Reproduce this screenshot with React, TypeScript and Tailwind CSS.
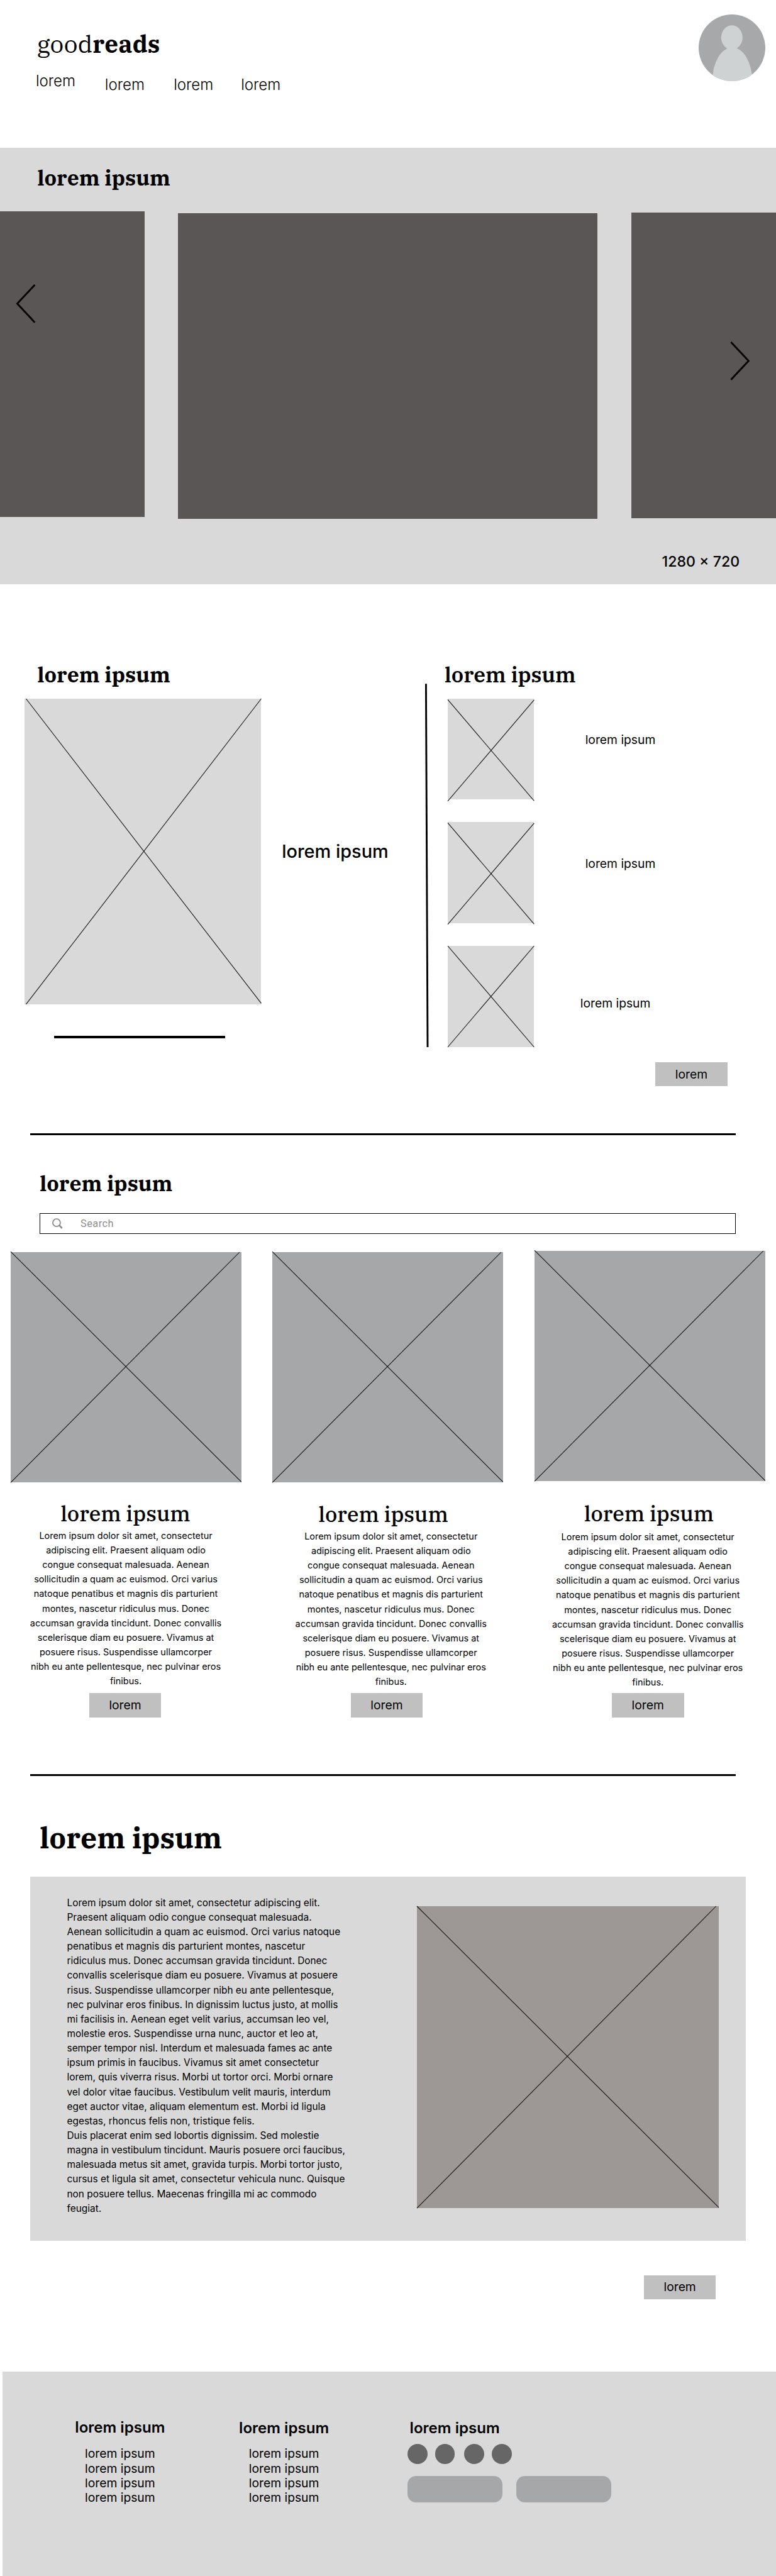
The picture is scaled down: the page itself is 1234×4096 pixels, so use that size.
const SERIF = "font-['IBM_Plex_Serif','DejaVu_Serif_Condensed',serif]";
const HEADING = `${SERIF} text-[35px] leading-[40px] font-bold whitespace-nowrap`;

const CARD_LINES = [
  "Lorem ipsum dolor sit amet, consectetur",
  "adipiscing elit. Praesent aliquam odio",
  "congue consequat malesuada. Aenean",
  "sollicitudin a quam ac euismod. Orci varius",
  "natoque penatibus et magnis dis parturient",
  "montes, nascetur ridiculus mus. Donec",
  "accumsan gravida tincidunt. Donec convallis",
  "scelerisque diam eu posuere. Vivamus at",
  "posuere risus. Suspendisse ullamcorper",
  "nibh eu ante pellentesque, nec pulvinar eros",
  "finibus.",
];

const ARTICLE_LINES = [
  "Lorem ipsum dolor sit amet, consectetur adipiscing elit.",
  "Praesent aliquam odio congue consequat malesuada.",
  "Aenean sollicitudin a quam ac euismod. Orci varius natoque",
  "penatibus et magnis dis parturient montes, nascetur",
  "ridiculus mus. Donec accumsan gravida tincidunt. Donec",
  "convallis scelerisque diam eu posuere. Vivamus at posuere",
  "risus. Suspendisse ullamcorper nibh eu ante pellentesque,",
  "nec pulvinar eros finibus. In dignissim luctus justo, at mollis",
  "mi facilisis in. Aenean eget velit varius, accumsan leo vel,",
  "molestie eros. Suspendisse urna nunc, auctor et leo at,",
  "semper tempor nisl. Interdum et malesuada fames ac ante",
  "ipsum primis in faucibus. Vivamus sit amet consectetur",
  "lorem, quis viverra risus. Morbi ut tortor orci. Morbi ornare",
  "vel dolor vitae faucibus. Vestibulum velit mauris, interdum",
  "eget auctor vitae, aliquam elementum est. Morbi id ligula",
  "egestas, rhoncus felis non, tristique felis.",
  "Duis placerat enim sed lobortis dignissim. Sed molestie",
  "magna in vestibulum tincidunt. Mauris posuere orci faucibus,",
  "malesuada metus sit amet, gravida turpis. Morbi tortor justo,",
  "cursus et ligula sit amet, consectetur vehicula nunc. Quisque",
  "non posuere tellus. Maecenas fringilla mi ac commodo",
  "feugiat.",
];

type CrossProps = {
  w: number;
  h: number;
  className: string;
  down: [number, number, number, number];
  up: [number, number, number, number];
};

/* Image placeholder: a filled box crossed by two thin diagonals. */
function Cross({ w, h, className, down, up }: CrossProps) {
  return (
    <div className={`shrink-0 ${className}`}>
      <svg viewBox={`0 0 ${w} ${h}`} className="block h-full w-full overflow-visible" stroke="#111" strokeWidth="1.1">
        <line x1={down[0]} y1={down[1]} x2={down[2]} y2={down[3]} />
        <line x1={up[0]} y1={up[1]} x2={up[2]} y2={up[3]} />
      </svg>
    </div>
  );
}

function Button({ className = "" }: { className?: string }) {
  return (
    <button className={`flex h-[40px] w-[119px] items-center justify-center bg-[#c0c0c0] text-[20px] leading-[24px] ${className}`}>
      lorem
    </button>
  );
}

function Header() {
  return (
    <header className="flex h-[244px] items-start justify-between pr-[18px]">
      <div className="pt-[52.5px]">
        <div className={`${SERIF} ml-[61px] text-[40px] leading-[40px] font-normal whitespace-nowrap`}>
          good<span className="font-bold">reads</span>
        </div>
        <nav className="mt-[27px] ml-[59px] flex text-[25px] leading-[30px] font-light">
          <a className="w-[114px]">lorem</a>
          <a className="mt-[6px] w-[113.5px]">lorem</a>
          <a className="mt-[6px] w-[111px]">lorem</a>
          <a className="mt-[6px]">lorem</a>
        </nav>
      </div>
      <svg className="mt-[24px] h-[110px] w-[110px]" viewBox="0 0 110 110">
        <clipPath id="avatar">
          <circle cx="55" cy="55" r="55" />
        </clipPath>
        <g clipPath="url(#avatar)">
          <rect width="110" height="110" fill="#a7a8aa" />
          <g fill="#ced2d3">
            <ellipse cx="54.8" cy="38" rx="17.6" ry="20" />
            <ellipse cx="55.5" cy="110" rx="33" ry="55.5" />
          </g>
        </g>
      </svg>
    </header>
  );
}

function Hero() {
  return (
    <section className="h-[720px] bg-[#d9d9d9] pt-[29px]">
      <h2 className={`${HEADING} ml-[61.7px]`}>lorem ipsum</h2>
      <div className="mt-[36px] flex h-[507px] items-start gap-[55px]">
        <div className="h-[504px] w-[239px] bg-[#5a5655] pt-[119px] pl-[26px]">
          <svg className="h-[66px] w-[34px]" viewBox="0 0 34 66" fill="none" stroke="#000" strokeWidth="3">
            <path d="M31.5 2 L2.5 33 L31.5 64" />
          </svg>
        </div>
        <div className="mt-[3px] h-[504px] w-[692px] bg-[#5a5655]" />
        <div className="mt-[2px] h-[504px] w-[239px] bg-[#5a5655] pt-[211px] pl-[162px]">
          <svg className="h-[66px] w-[34px]" viewBox="0 0 34 66" fill="none" stroke="#000" strokeWidth="3">
            <path d="M2.5 2 L31.5 33 L2.5 64" />
          </svg>
        </div>
      </div>
      <p className="mt-[56px] pr-[60px] text-right text-[24px] leading-[30px] font-medium">1280 × 720</p>
    </section>
  );
}

function Featured() {
  return (
    <section className="flex h-[905px] pt-[128px]">
      <div className="w-[700px]">
        <h2 className={`${HEADING} mt-[0.5px] ml-[61.7px]`}>lorem ipsum</h2>
        <div className="mt-[20.5px] ml-[40px] flex">
          <Cross w={390} h={504} className="h-[504px] w-[390px] bg-[#d9d9d9]" down={[2.5, 0, 390.5, 502.5]} up={[2.5, 504, 390.5, 0]} />
          <p className="mt-[233.5px] ml-[35px] text-[30px] leading-[36px] font-medium">lorem ipsum</p>
        </div>
        <div className="mt-[52px] ml-[89px] h-[4px] w-[282px] bg-black" />
      </div>
      <svg className="mt-[36px] h-[600px] w-[8px]" viewBox="0 0 8 600" stroke="#000" strokeWidth="3">
        <line x1="2.5" y1="0" x2="5.2" y2="600" />
      </svg>
      <div>
        <h2 className={`${SERIF} ml-[25.5px] text-[35px] leading-[40px] font-semibold`}>lorem ipsum</h2>
        <div className="mt-[20px] ml-[31px] flex flex-col gap-[37px] text-[20px] leading-[24px]">
          <div className="flex">
            <Cross w={142} h={167} className="h-[167px] w-[142px] bg-[#d9d9d9]" down={[0, 1.5, 142.5, 168.5]} up={[0, 169, 142.5, 2]} />
            <p className="mt-[57px] ml-[84.5px]">lorem ipsum</p>
          </div>
          <div className="flex">
            <Cross w={142} h={167} className="h-[167px] w-[142px] bg-[#d9d9d9]" down={[0, 1.5, 142.5, 168.5]} up={[0, 169, 142.5, 2]} />
            <p className="mt-[57px] ml-[84.5px]">lorem ipsum</p>
          </div>
          <div className="flex">
            <Cross w={142} h={167} className="h-[167px] w-[142px] bg-[#d9d9d9]" down={[0, 0, 142.5, 167]} up={[0, 167, 142.5, 0]} />
            <p className="mt-[83.3px] ml-[76.3px]">lorem ipsum</p>
          </div>
        </div>
        <Button className="mt-[25px] ml-[373px]" />
      </div>
    </section>
  );
}

function Search() {
  return (
    <section>
      <h2 className={`${HEADING} mt-[60px] ml-[65.5px]`}>lorem ipsum</h2>
      <div className="mt-[29px] ml-[65px] flex h-[34px] w-[1149px] items-center border border-black pl-[20.5px]">
        <svg className="h-[18px] w-[18px]" viewBox="0 0 18 18" fill="none" stroke="#8a8a8a">
          <circle cx="7.2" cy="7.4" r="6.2" strokeWidth="1.9" />
          <path d="M11.6 11.8 L16.4 16.6" strokeWidth="2.6" />
        </svg>
        <span className="ml-[28.2px] font-['Roboto',sans-serif] text-[17px] leading-[24px] tracking-[0.5px] text-[#8e8e8e]">Search</span>
      </div>
    </section>
  );
}

type CardProps = { top: string; title: string; body: string; button: string };

function Card({ top, title, body, button }: CardProps) {
  return (
    <article className={`w-[380.5px] ${top}`}>
      <Cross w={380.5} h={380} className="h-[380px] w-[380.5px] bg-[#a5a7a9]" down={[0, -1, 380.5, 379]} up={[0, 380, 377.5, 0]} />
      <h3 className={`${SERIF} text-[35px] leading-[40px] font-medium whitespace-nowrap ${title}`}>lorem ipsum</h3>
      <p className={`w-[320px] text-center text-[15px] leading-[24px] ${body}`}>
        {CARD_LINES.map((line) => (
          <span key={line} className="block whitespace-nowrap">{line}</span>
        ))}
      </p>
      <Button className={button} />
    </article>
  );
}

function Cards() {
  return (
    <section className="mt-[28px] flex h-[770px] gap-[51px] pl-[18px]">
      <Card top="mt-[2px]" title="mt-[31.3px] ml-[82px]" body="mt-[4.4px] ml-[29.5px]" button="mt-[8.1px] ml-[129px]" />
      <Card top="mt-[2px]" title="mt-[32.3px] ml-[76px]" body="mt-[4.4px] ml-[35.5px]" button="mt-[7.1px] ml-[129px]" />
      <Card top="ml-[0.7px]" title="mt-[33.3px] ml-[82px]" body="mt-[6.4px] ml-[27px]" button="mt-[6.1px] ml-[127.5px]" />
    </section>
  );
}

function Article() {
  return (
    <section>
      <h2 className={`${SERIF} mt-[73.7px] ml-[65.5px] text-[48px] leading-[56px] font-bold`}>lorem ipsum</h2>
      <div className="mt-[37.3px] ml-[50px] flex h-[600px] w-[1180px] items-start justify-between bg-[#d9d9d9] pr-[44px] pl-[60.5px]">
        <p className="mt-[30.4px] text-[16px] leading-[24px]">
          {ARTICLE_LINES.map((line) => (
            <span key={line} className="block whitespace-nowrap">{line}</span>
          ))}
        </p>
        <Cross w={498} h={498} className="mt-[48px] h-[498px] w-[498px] bg-[#9d9896]" down={[0, 0, 498, 497]} up={[0, 498, 493.5, 0]} />
      </div>
      <Button className="mt-[57px] ml-[1062px]" />
    </section>
  );
}

function FooterLinks({ className, first }: { className: string; first: string }) {
  return (
    <div className={`w-[160px] text-center ${className}`}>
      <h4 className="text-[25px] leading-[30px] font-semibold whitespace-nowrap">lorem ipsum</h4>
      <ul className={`text-[20px] leading-[24px] ${first}`}>
        <li className="mb-[1.3px]">lorem ipsum</li>
        <li>lorem ipsum</li>
        <li>lorem ipsum</li>
        <li>lorem ipsum</li>
      </ul>
    </div>
  );
}

function Footer() {
  return (
    <footer className="mt-[119px] ml-[4px] flex h-[337px] items-start bg-[#d9d9d9]">
      <FooterLinks className="ml-[114px] pt-[77.5px]" first="mt-[15.7px]" />
      <FooterLinks className="ml-[110.5px] pt-[79px]" first="mt-[14.2px]" />
      <div className="ml-[119.5px] pt-[79px]">
        <h4 className="ml-[8px] text-[25px] leading-[30px] font-semibold">lorem ipsum</h4>
        <div className="mt-[10px] ml-[4px] flex">
          <span className="size-[33px] rounded-full bg-[#666666]" />
          <span className="ml-[12.6px] size-[33px] rounded-full bg-[#666666]" />
          <span className="ml-[15.4px] size-[33px] rounded-full bg-[#666666]" />
          <span className="ml-[12.6px] size-[33px] rounded-full bg-[#666666]" />
        </div>
        <div className="mt-[20px] ml-[4px] flex gap-[22.6px]">
          <span className="h-[44px] w-[157px] rounded-[14px] bg-[#a5a7a9]" />
          <span className="h-[44px] w-[157px] rounded-[14px] bg-[#a5a7a9]" />
        </div>
      </div>
    </footer>
  );
}

function Divider() {
  return <div className="mb-[-0.6px] ml-[50px] h-[3.6px] w-[1164px] bg-black" />;
}

export default function App() {
  return (
    <div className="w-[1280px] overflow-hidden bg-white font-['Inter',sans-serif] text-black [zoom:0.964]">
      <Header />
      <Hero />
      <Featured />
      <Divider />
      <Search />
      <Cards />
      <div className="h-[93px]" />
      <Divider />
      <Article />
      <Footer />
    </div>
  );
}
